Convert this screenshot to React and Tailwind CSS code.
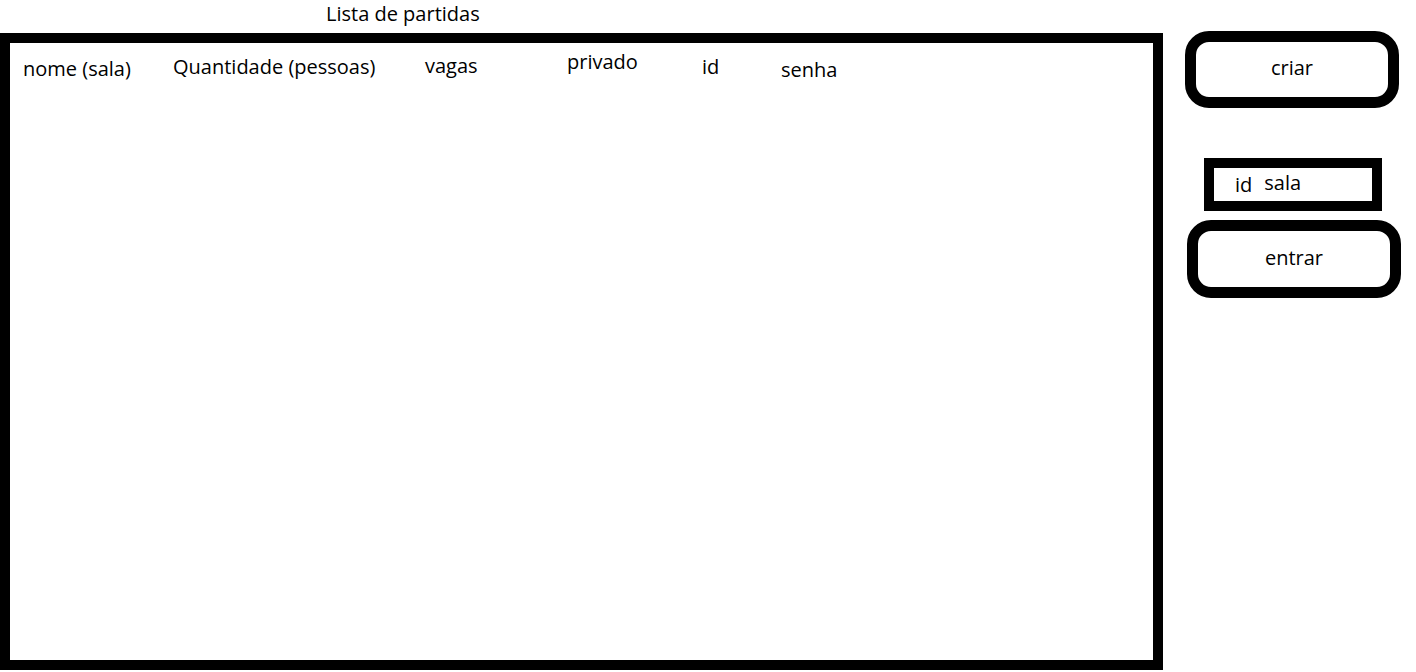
export default function App() {
  const font = { fontFamily: '"Open Sans", "Noto Sans", sans-serif' };
  return (
    <div className="flex w-[1416px] h-[672px] bg-white text-black" style={font}>
      {/* lista */}
      <div className="w-[1163px] flex flex-col">
        <div className="h-[33px] pl-[326px] text-[20px] leading-[28px]">
          Lista de partidas
        </div>
        <div className="h-[637px] border-[10px] border-black">
          <div className="flex pl-[13px] text-[20px] leading-[28px]">
            <span className="w-[150px] mt-[12px]">nome (sala)</span>
            <span className="w-[252px] mt-[10px]">Quantidade (pessoas)</span>
            <span className="w-[142px] mt-[9px]">vagas</span>
            <span className="w-[135px] mt-[5px]">privado</span>
            <span className="w-[79px] mt-[10px]">id</span>
            <span className="mt-[13px]">senha</span>
          </div>
        </div>
      </div>

      {/* ações */}
      <div className="flex flex-col text-[20px] leading-[28px]">
        <button className="ml-[22px] mt-[31px] w-[214px] h-[77px] border-[11px] border-black rounded-[24px] flex items-center justify-center pb-[3px]">
          criar
        </button>
        <div className="ml-[41px] mt-[50px] w-[178px] h-[53px] border-[10px] border-black flex items-center pl-[21px]">
          <span>id</span>
          <span className="ml-[12px] -mt-[3px]">sala</span>
        </div>
        <button className="ml-[24px] mt-[9px] w-[214px] h-[78px] border-[11px] border-black rounded-[24px] flex items-center justify-center pb-[2px]">
          entrar
        </button>
      </div>
    </div>
  );
}
